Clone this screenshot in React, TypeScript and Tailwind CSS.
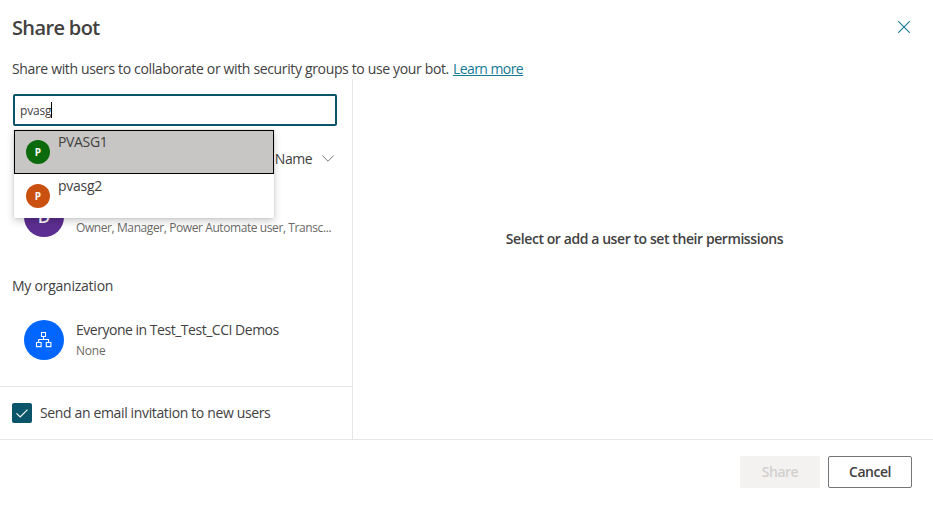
import React from "react";

const PEOPLE = [
  { name: "PVASG1", avatar: "bg-[#0b6a0b]", row: "border border-black bg-[#c8c6c4]", text: "tracking-[-0.35px]" },
  { name: "pvasg2", avatar: "bg-[#ca5010]", row: "border border-transparent bg-white", text: "tracking-[-0.25px]" },
];

function CloseIcon() {
  return (
    <svg width="12" height="12" viewBox="0 0 12 12" fill="none" stroke="#127a94" strokeWidth="1.1">
      <path d="M0.2 0.2 11.8 11.8M11.8 0.2 0.2 11.8" />
    </svg>
  );
}

function ChevronIcon() {
  return (
    <svg width="12" height="7" viewBox="0 0 12 7" fill="none" stroke="#7a7977" strokeWidth="1">
      <path d="M0.3 0.5 6 6.2 11.7 0.5" />
    </svg>
  );
}

function OrgIcon() {
  return (
    <svg width="16" height="16" viewBox="0 0 16 16" fill="none" stroke="#fff" strokeWidth="1.1">
      <path d="M5.5 0.5h4v4h-4zM0.5 10.5h4.6v4.1H0.5zM10.3 10.5h4.6v4.1h-4.6zM7.5 4.5v3M2.7 10.5v-3h9.8v3" />
    </svg>
  );
}

function Dropdown() {
  return (
    <div className="absolute left-[14px] top-[51px] w-[260px] bg-white shadow-[0_3px_8px_rgba(0,0,0,0.2),0_0_2px_rgba(0,0,0,0.12)]">
      {PEOPLE.map((p) => (
        <div key={p.name} className={`flex h-11 pl-[11px] ${p.row}`}>
          <div className={`mt-[9px] flex size-6 items-center justify-center rounded-full pt-px text-[10px] font-bold text-white ${p.avatar}`}>
            P
          </div>
          <span className={`ml-2 mt-px h-5 text-sm leading-5 ${p.text}`}>{p.name}</span>
        </div>
      ))}
    </div>
  );
}

export default function App() {
  return (
    <div className="flex h-[505px] w-[933px] flex-col overflow-hidden whitespace-nowrap bg-white font-['Open_Sans',sans-serif] text-sm text-[#42413f]">
      <header className="h-[79px] pl-3">
        <div className="flex justify-between pr-[23px]">
          <h1 className="mt-[14px] text-xl font-semibold leading-7 tracking-[-0.63px]">Share bot</h1>
          <button className="mt-[21px] size-3" aria-label="Close"><CloseIcon /></button>
        </div>
        <p className="mt-[17px] leading-5">
          <span className="tracking-[-0.35px]">Share with users to collaborate or with security groups to use your bot.</span>
          <a className="ml-1 tracking-[-0.57px] text-[#127a94] underline underline-offset-1">Learn more</a>
        </p>
      </header>
      <main className="flex h-[360px]">
        <section className="relative flex w-[353px] flex-col border-r border-[#e6e6e6]">
          <div className="ml-[13px] mt-[15px] flex h-8 w-[324px] shrink-0 items-center rounded-[2px] border-2 border-[#0b556a] pl-[5px] text-xs">
            <span className="mt-px tracking-[-0.2px]">pvasg</span>
            <span className="h-4 w-px bg-black" />
          </div>
          <div className="mt-[23px] flex h-5 items-center justify-end pr-[18px] leading-5">
            <span className="mr-[10px] tracking-[-0.5px]">Name</span>
            <div className="-mt-[2px]"><ChevronIcon /></div>
          </div>
          <div className="mt-7 flex h-10 pl-6">
            <div className="flex size-10 items-center justify-center rounded-full bg-[#5c2e91] text-[17px] font-semibold text-white">D</div>
            <span className="ml-3 mt-[23px] h-4 text-xs leading-4 tracking-[-0.41px] text-[#6b6967]">Owner, Manager, Power Automate user, Transc...</span>
          </div>
          <h2 className="mt-[39px] h-5 pl-3 leading-5 tracking-[-0.24px]">My organization</h2>
          <div className="mt-6 flex h-10 pl-6">
            <div className="flex size-10 items-center justify-center rounded-full bg-[#0066ff]"><OrgIcon /></div>
            <div className="ml-3">
              <div className="h-5 leading-5 tracking-[-0.48px]">Everyone in Test_Test_CCI Demos</div>
              <div className="mt-[3px] text-xs leading-4 tracking-[-0.2px] text-[#6b6967]">None</div>
            </div>
          </div>
          <label className="mt-auto flex h-[53px] items-center border-t border-[#e6e6e6] pl-3">
            <span className="flex size-5 items-center justify-center rounded-[2px] bg-[#0b556a]">
              <svg width="12" height="9" viewBox="0 0 12 9" fill="none" stroke="#fff" strokeWidth="1.1"><path d="M0.5 4.3 4.2 8 11.5 0.7" /></svg>
            </span>
            <span className="ml-2 tracking-[-0.36px]">Send an email invitation to new users</span>
          </label>
          <Dropdown />
        </section>
        <section className="flex flex-1 justify-center pl-[3px] pt-[150px] font-semibold leading-5">
          <span className="h-5 tracking-[-0.42px]">Select or add a user to set their permissions</span>
        </section>
      </main>
      <footer className="flex flex-1 justify-end gap-2 border-t border-[#e6e6e6] pr-[21px] pt-4 font-semibold">
        <button className="h-8 w-20 rounded-[2px] bg-[#f3f2f1] tracking-[-0.5px] text-[#d2d0ce]">Share</button>
        <button className="h-8 w-[84px] rounded-[2px] border border-[#777574] tracking-[-0.5px]">Cancel</button>
      </footer>
    </div>
  );
}
